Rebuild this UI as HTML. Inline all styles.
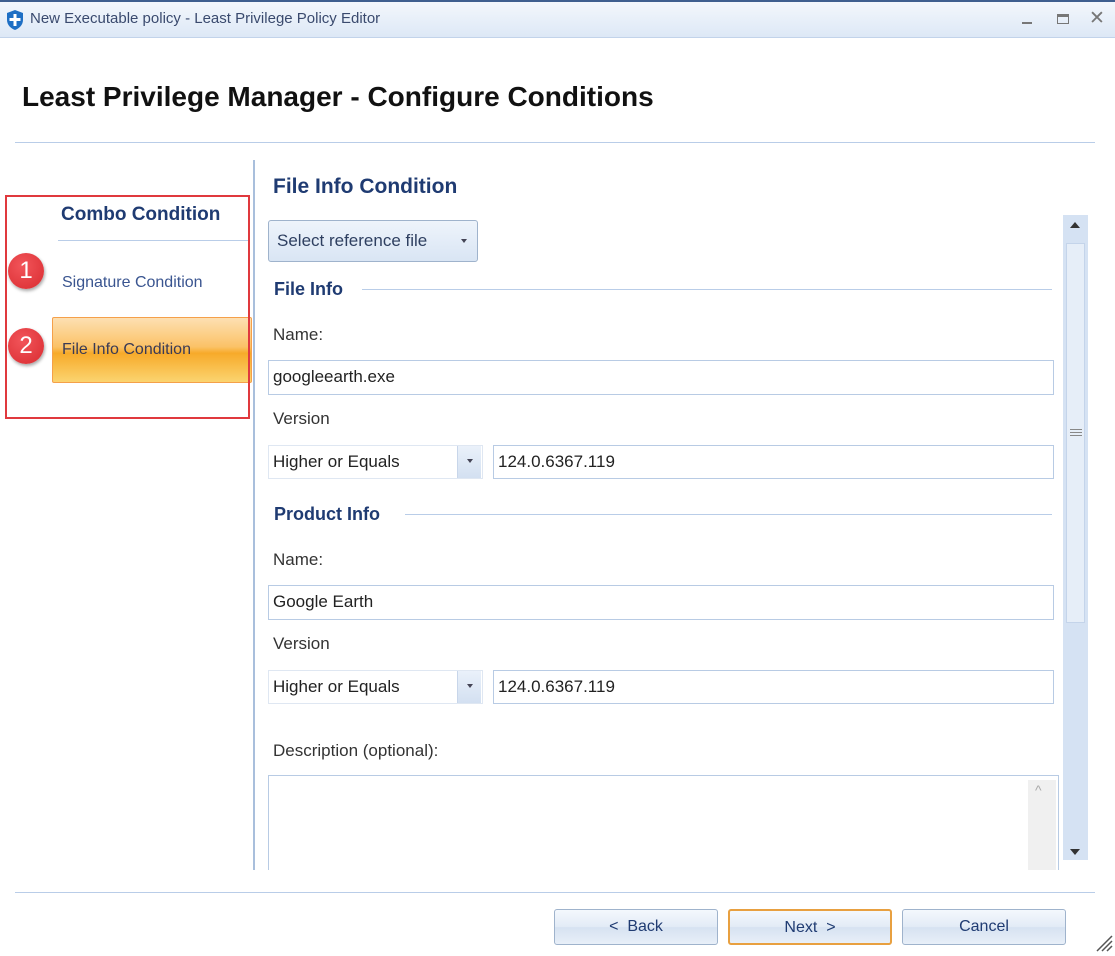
<!DOCTYPE html>
<html><head><meta charset="utf-8"><style>
*{margin:0;padding:0;box-sizing:border-box}
body{width:1115px;height:956px;background:#fff;position:relative;overflow:hidden;font-family:"Liberation Sans",sans-serif;color:#222}
.a{position:absolute}
.t{position:absolute;white-space:nowrap}
.inp{position:absolute;border:1px solid #b8cbe4;background:#fff;font-size:17px;padding-left:4px;line-height:32px}
.lbl{position:absolute;font-size:17px;color:#333;white-space:nowrap}
.sec{position:absolute;font-size:18px;font-weight:bold;color:#1f3b72}
.hl{position:absolute;height:1px;background:#b9cde8}
.btn{position:absolute;top:909px;height:36px;width:164px;border:1px solid #9fb3cc;border-radius:3px;background:linear-gradient(#f4f8fd,#e2ebf6 50%,#d6e2f1 51%,#e8eff8);text-align:center;line-height:34px;font-size:16px;color:#1f3b72}
.dd{position:absolute;width:24px;height:32px;background:linear-gradient(#eaf1fa,#d3e0f1);border-left:1px solid #c8d6ea}
.dd:after{content:"";position:absolute;left:9px;top:13px;border:3px solid transparent;border-top:4px solid #445;}
.badge{position:absolute;width:36px;height:36px;border-radius:50%;background:radial-gradient(circle at 40% 35%,#f2555a,#d92b30);color:#fff;font-size:24px;text-align:center;line-height:36px;box-shadow:1px 2px 3px rgba(0,0,0,.35)}
</style></head><body>
<div class="a" style="left:0;top:0;width:1115px;height:38px;background:linear-gradient(#f3f7fc,#dde8f6);border-top:2px solid #3f5f8f;border-bottom:1px solid #c2d3ea"></div>
<svg class="a" style="left:5px;top:9px" width="20" height="22" viewBox="0 0 20 22"><path d="M10 1 L18 4 V11 C18 16 14 19.5 10 21 C6 19.5 2 16 2 11 V4 Z" fill="#1e6fc4"/><path d="M10 5 V17 M4.5 10.5 H15.5" stroke="#fff" stroke-width="3"/></svg>
<div class="t" style="left:30px;top:10px;font-size:15px;color:#3a4a6e">New Executable policy - Least Privilege Policy Editor</div>
<div class="a" style="left:1022px;top:22px;width:10px;height:2px;background:#777"></div>
<div class="a" style="left:1057px;top:14px;width:12px;height:10px;border:1px solid #777;border-top:3px solid #777"></div>
<div class="t" style="left:1089px;top:7px;font-size:19px;color:#777">✕</div>

<div class="t" style="left:22px;top:81px;font-size:28px;font-weight:bold;color:#111">Least Privilege Manager - Configure Conditions</div>
<div class="hl" style="left:15px;top:142px;width:1080px"></div>
<div class="a" style="left:253px;top:160px;width:2px;height:710px;background:#a9bfdc"></div>

<div class="t" style="left:61px;top:204px;font-size:19px;font-weight:bold;color:#1f3b72">Combo Condition</div>
<div class="hl" style="left:58px;top:240px;width:191px"></div>
<div class="t" style="left:62px;top:274px;font-size:16px;color:#3a5590">Signature Condition</div>
<div class="a" style="left:52px;top:317px;width:200px;height:66px;border:1px solid #f5a04a;border-radius:2px;background:linear-gradient(#fde0b2,#fbc267 45%,#f7aa2a 55%,#fbd470)"></div>
<div class="t" style="left:62px;top:341px;font-size:16px;color:#3a3a55">File Info Condition</div>
<div class="a" style="left:5px;top:195px;width:245px;height:224px;border:2px solid #e0393e"></div>
<div class="badge" style="left:8px;top:253px">1</div>
<div class="badge" style="left:8px;top:328px">2</div>

<div class="t" style="left:273px;top:175px;font-size:21px;font-weight:bold;color:#1f3b72">File Info Condition</div>
<div class="a" style="left:268px;top:220px;width:210px;height:42px;border:1px solid #9fb3cc;border-radius:3px;background:linear-gradient(#eef4fb,#d9e5f4)"></div>
<div class="t" style="left:277px;top:231px;font-size:17px;color:#2e3f60">Select reference file</div>
<div class="a" style="left:461px;top:239px;border:3px solid transparent;border-top:4px solid #445"></div>

<div class="a" style="left:1063px;top:215px;width:25px;height:645px;background:#d5e2f3"></div>
<div class="a" style="left:1066px;top:243px;width:19px;height:380px;background:#e6eef8;border:1px solid #c4d4ea"></div>
<div class="a" style="left:1070px;top:222px;border:5px solid transparent;border-bottom:6px solid #333;border-top:0"></div>
<div class="a" style="left:1070px;top:849px;border:5px solid transparent;border-top:6px solid #333;border-bottom:0"></div>
<div class="a" style="left:1070px;top:429px;width:12px;height:7px;border-top:1px solid #888;border-bottom:1px solid #888"></div>
<div class="a" style="left:1070px;top:432px;width:12px;height:1px;background:#888"></div>

<div class="sec" style="left:274px;top:279px">File Info</div>
<div class="hl" style="left:362px;top:289px;width:690px"></div>
<div class="lbl" style="left:273px;top:325px">Name:</div>
<div class="inp" style="left:268px;top:360px;width:786px;height:35px">googleearth.exe</div>
<div class="lbl" style="left:273px;top:409px">Version</div>
<div class="inp" style="left:268px;top:445px;width:215px;height:34px;border-color:#dfe7f2">Higher or Equals</div>
<div class="dd" style="left:457px;top:446px"></div>
<div class="inp" style="left:493px;top:445px;width:561px;height:34px">124.0.6367.119</div>

<div class="sec" style="left:274px;top:504px">Product Info</div>
<div class="hl" style="left:405px;top:514px;width:647px"></div>
<div class="lbl" style="left:273px;top:550px">Name:</div>
<div class="inp" style="left:268px;top:585px;width:786px;height:35px">Google Earth</div>
<div class="lbl" style="left:273px;top:634px">Version</div>
<div class="inp" style="left:268px;top:670px;width:215px;height:34px;border-color:#dfe7f2">Higher or Equals</div>
<div class="dd" style="left:457px;top:671px"></div>
<div class="inp" style="left:493px;top:670px;width:561px;height:34px">124.0.6367.119</div>

<div class="lbl" style="left:273px;top:741px">Description (optional):</div>
<div class="a" style="left:268px;top:775px;width:791px;height:95px;border:1px solid #b8cbe4;border-bottom:0"></div>
<div class="a" style="left:1028px;top:780px;width:28px;height:90px;background:#f0f0f0"></div>
<div class="t" style="left:1035px;top:782px;font-size:14px;color:#aaa">^</div>

<div class="hl" style="left:15px;top:892px;width:1080px"></div>
<div class="btn" style="left:554px">&lt;&nbsp; Back</div>
<div class="btn" style="left:728px;border:2px solid #e8a040">Next &nbsp;&gt;</div>
<div class="btn" style="left:902px">Cancel</div>
<svg class="a" style="left:1093px;top:932px" width="20" height="20"><path d="M19 4 L4 19 M19 9 L9 19 M19 14 L14 19" stroke="#555" stroke-width="1.5"/></svg>
</body></html>
